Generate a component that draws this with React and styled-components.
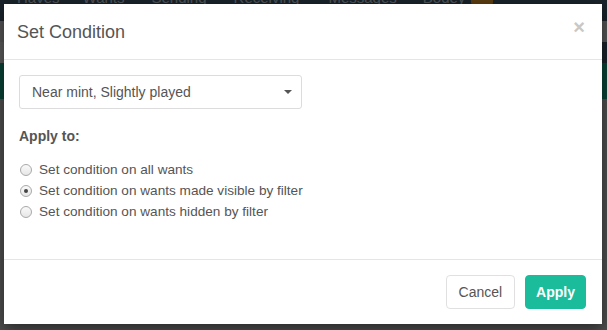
import React from "react";
import styled, { createGlobalStyle } from "styled-components";

const GlobalStyle = createGlobalStyle`
  html, body { margin: 0; padding: 0; }
  body {
    width: 607px;
    height: 330px;
    overflow: hidden;
    font-family: "Liberation Sans", Arial, sans-serif;
    background: #8c8c8c;
  }
`;

const Page = styled.div`
  position: relative;
  width: 607px;
  height: 330px;
  overflow: hidden;
`;

const Nav = styled.nav`
  height: 21px;
  background: #43576b;
  display: flex;
  align-items: flex-end;
  padding-left: 17px;
  overflow: hidden;
`;

const NavItem = styled.span`
  font-size: 15px;
  line-height: 15px;
  color: #c9d4dd;
  margin-right: ${(p) => p.gap}px;
  margin-bottom: 16px;
  display: inline-flex;
  align-items: center;
  gap: 6px;
`;

const Badge = styled.span`
  display: inline-block;
  width: 22px;
  height: 14px;
  border-radius: 3px;
  background: #e39a2b;
`;

const SubBar = styled.div`
  height: 21px;
  background: #d8d8d8;
`;

const NavyStrip = styled.div`
  height: 21px;
  display: flex;
  justify-content: flex-end;
  background: #e6e6e6;
  &::after {
    content: "";
    width: 40px;
    background: #43576b;
  }
`;

const GreenBar = styled.div`
  height: 36px;
  background: #1aab8a;
`;

const Content = styled.div`
  height: 231px;
  background: #c6c6c6;
`;

const Overlay = styled.div`
  position: absolute;
  inset: 0;
  background: rgba(0, 0, 0, 0.6);
`;

const Modal = styled.div`
  position: absolute;
  left: 4px;
  top: 4px;
  width: 598px;
  height: 320px;
  background: #fff;
  box-shadow: 0 5px 15px rgba(0, 0, 0, 0.5);
  display: flex;
  flex-direction: column;
  color: #555;
`;

const Header = styled.div`
  display: flex;
  justify-content: space-between;
  align-items: flex-start;
  padding: 15px 15px 14px 13px;
  border-bottom: 1px solid #e5e5e5;
`;

const Title = styled.h4`
  margin: 0;
  font-size: 18px;
  font-weight: normal;
  line-height: 26px;
  color: #555;
`;

const Close = styled.button`
  border: 0;
  background: none;
  padding: 0;
  margin-top: -2px;
  margin-right: 2px;
  font-family: "Liberation Sans", Arial, sans-serif;
  font-size: 20px;
  font-weight: bold;
  line-height: 20px;
  color: #c8c8c8;
  cursor: pointer;
`;

const Body = styled.div`
  flex: 1;
  padding: 15px 15px 0 15px;
`;

const Select = styled.div`
  width: 283px;
  height: 34px;
  box-sizing: border-box;
  border: 1px solid #dcdcdc;
  border-radius: 3px;
  display: flex;
  align-items: center;
  justify-content: space-between;
  padding: 0 8px 0 12px;
  font-size: 14px;
  color: #555;
`;

const Caret = styled.span`
  width: 0;
  height: 0;
  border-left: 4px solid transparent;
  border-right: 4px solid transparent;
  border-top: 4px solid #555;
  margin-right: 1px;
`;

const Label = styled.div`
  margin-top: 17px;
  font-size: 14px;
  font-weight: bold;
  line-height: 20px;
  color: #555;
`;

const RadioList = styled.div`
  margin-top: 13px;
  display: flex;
  flex-direction: column;
`;

const RadioRow = styled.label`
  display: flex;
  align-items: center;
  height: 21px;
  font-size: 13.6px;
  color: #555;
`;

const Dot = styled.span`
  width: 12px;
  height: 12px;
  box-sizing: border-box;
  border-radius: 50%;
  border: 1px solid #a9a9a9;
  background: linear-gradient(#fafafa, #e6e6e6);
  margin: 0 7px 0 1px;
  display: flex;
  align-items: center;
  justify-content: center;
  &::after {
    content: "";
    width: 4px;
    height: 4px;
    border-radius: 50%;
    background: ${(p) => (p.checked ? "#444" : "transparent")};
  }
`;

const Footer = styled.div`
  display: flex;
  justify-content: flex-end;
  gap: 10px;
  padding: 15px 16px 15px 15px;
  border-top: 1px solid #e5e5e5;
`;

const Button = styled.button`
  height: 34px;
  box-sizing: border-box;
  padding: 0 ${(p) => (p.primary ? 10 : 12)}px;
  border-radius: 4px;
  font-family: "Liberation Sans", Arial, sans-serif;
  font-size: 14px;
  font-weight: ${(p) => (p.primary ? "bold" : "normal")};
  border: 1px solid ${(p) => (p.primary ? "#1abc9c" : "#e0e0e0")};
  background: ${(p) => (p.primary ? "#1abc9c" : "#fff")};
  color: ${(p) => (p.primary ? "#fff" : "#555")};
`;

const navItems = [
  { label: "Haves", gap: 23 },
  { label: "Wants", gap: 27 },
  { label: "Sending", gap: 27 },
  { label: "Receiving", gap: 29 },
  { label: "Messages", gap: 26 },
];

const options = [
  "Set condition on all wants",
  "Set condition on wants made visible by filter",
  "Set condition on wants hidden by filter",
];

export default function App() {
  return (
    <>
      <GlobalStyle />
      <Page>
        <Nav>
          {navItems.map((n) => (
            <NavItem key={n.label} gap={n.gap}>{n.label}</NavItem>
          ))}
          <NavItem gap={0}>
            Bodey <Badge />
          </NavItem>
        </Nav>
        <SubBar />
        <NavyStrip />
        <GreenBar />
        <Content />
        <Overlay />
        <Modal>
          <Header>
            <Title>Set Condition</Title>
            <Close>×</Close>
          </Header>
          <Body>
            <Select>
              <span>Near mint, Slightly played</span>
              <Caret />
            </Select>
            <Label>Apply to:</Label>
            <RadioList>
              {options.map((o, i) => (
                <RadioRow key={o}>
                  <Dot checked={i === 1} />
                  {o}
                </RadioRow>
              ))}
            </RadioList>
          </Body>
          <Footer>
            <Button>Cancel</Button>
            <Button primary>Apply</Button>
          </Footer>
        </Modal>
      </Page>
    </>
  );
}
